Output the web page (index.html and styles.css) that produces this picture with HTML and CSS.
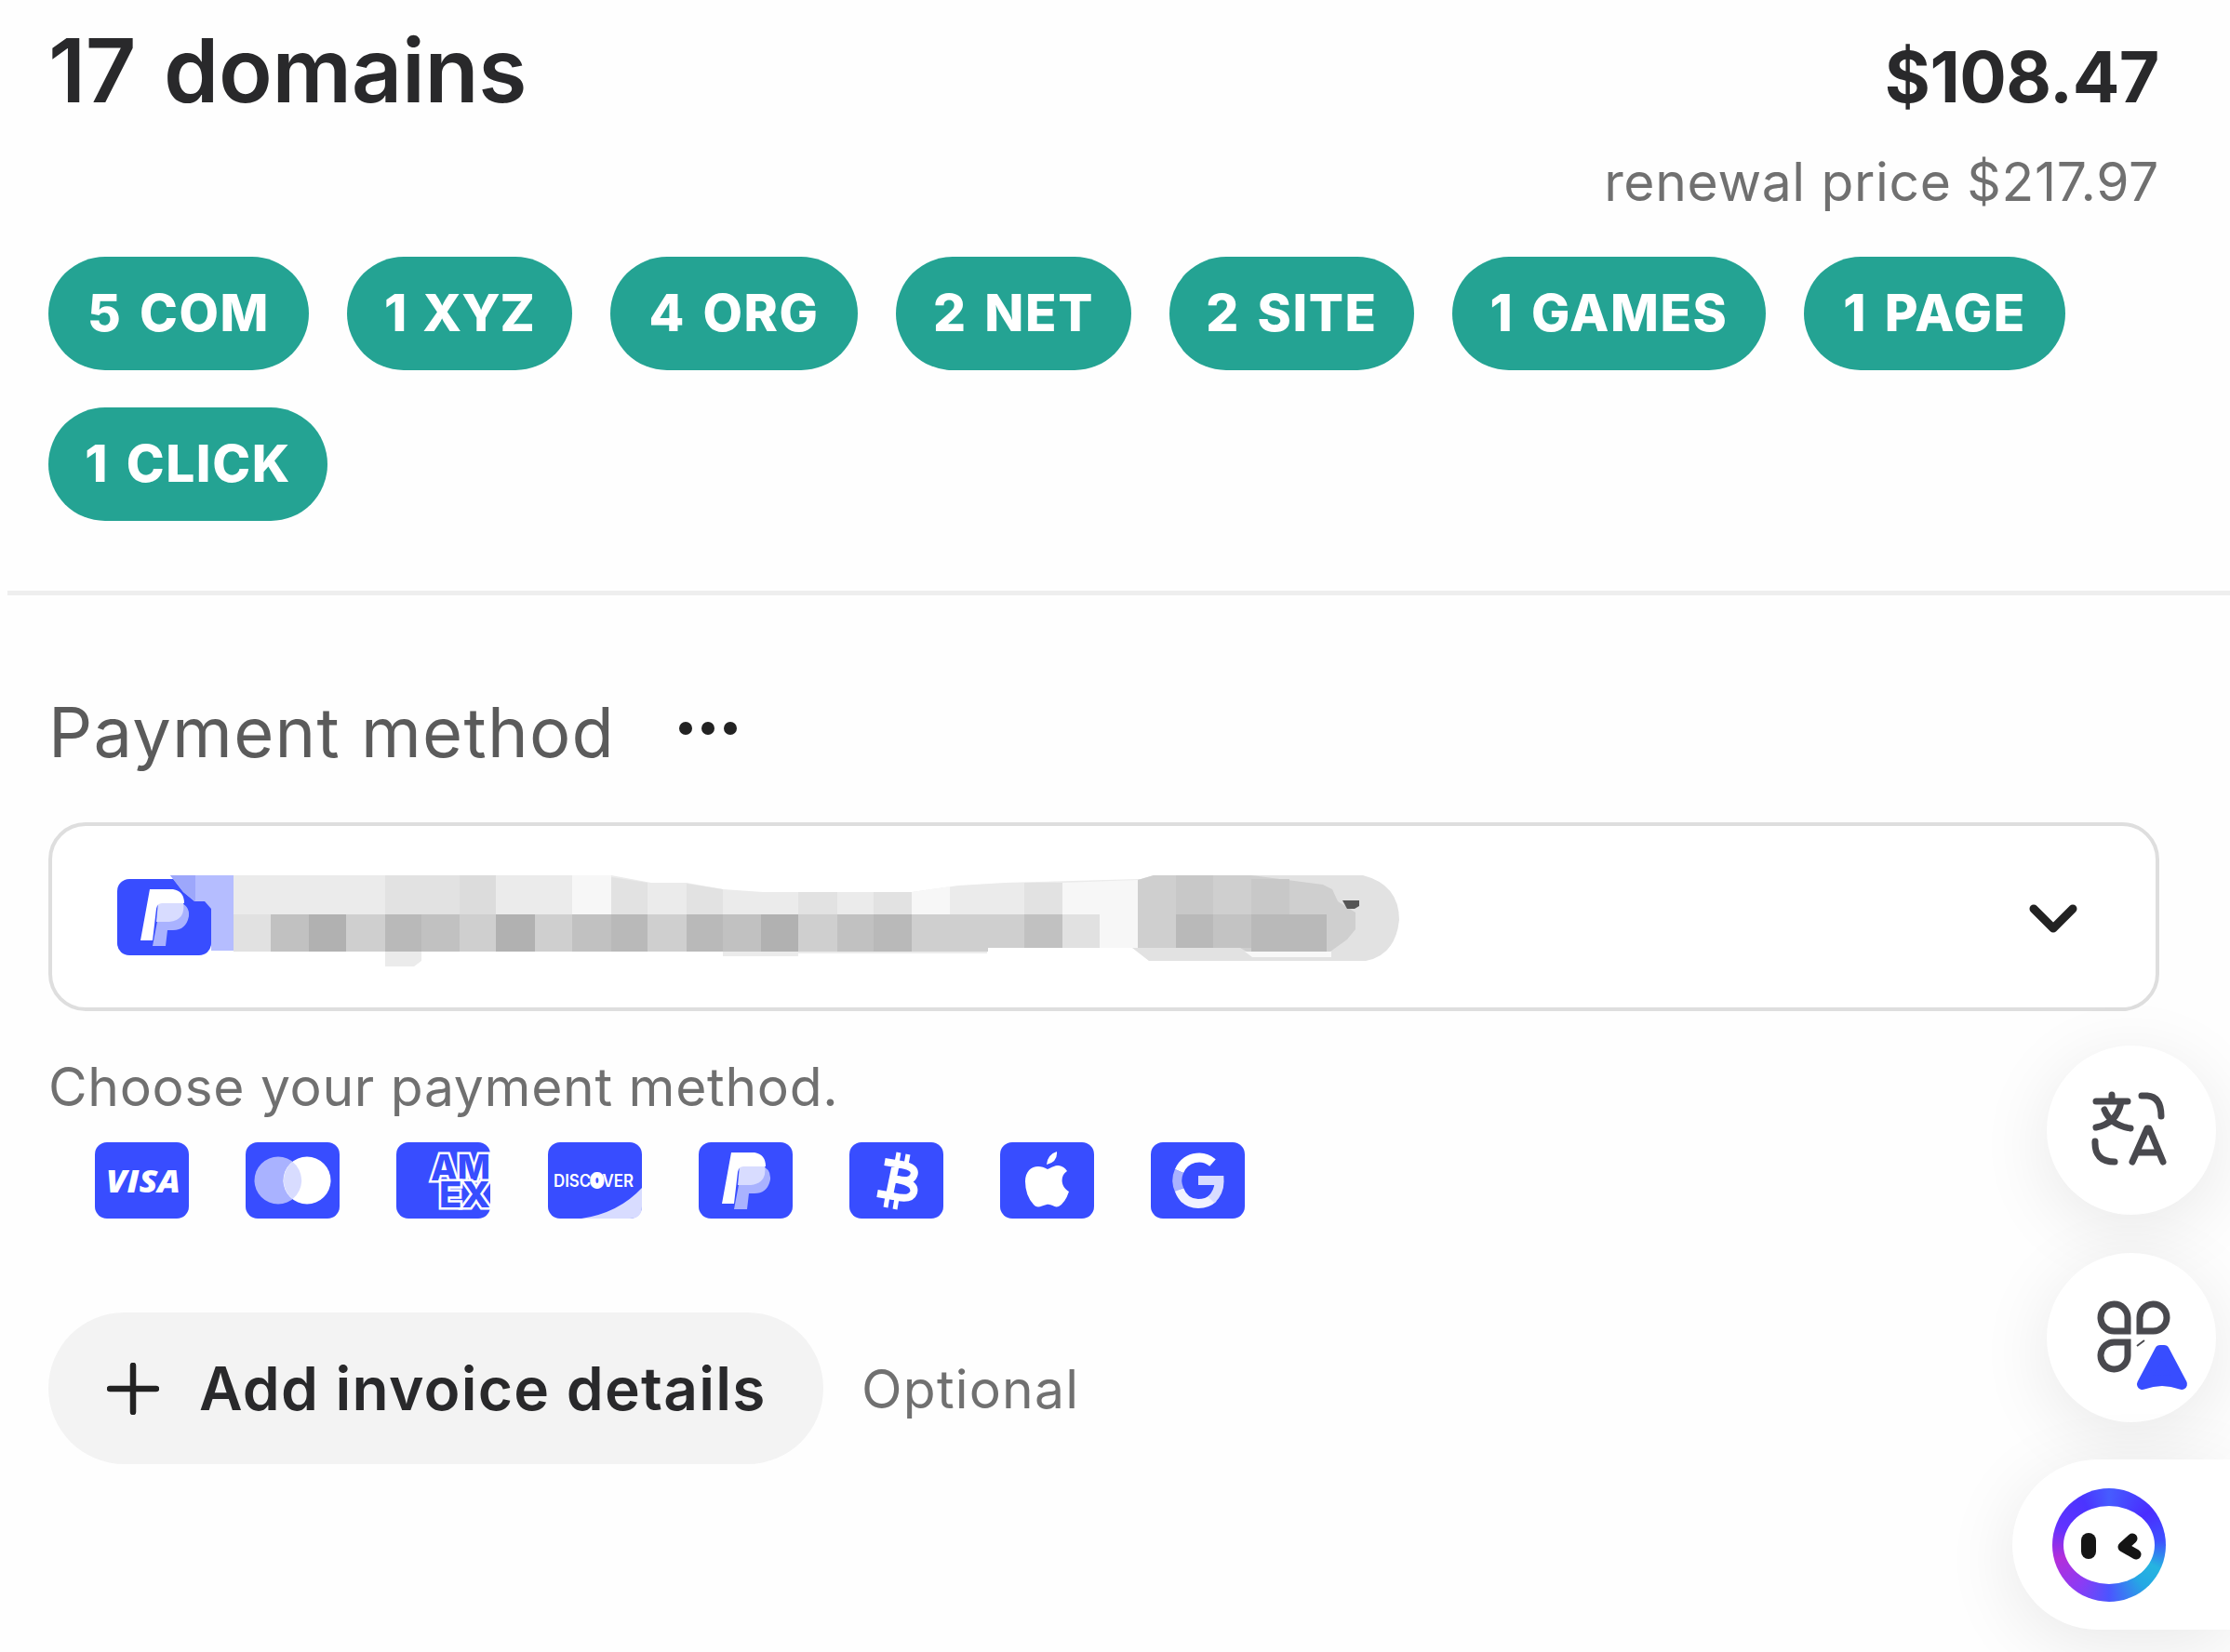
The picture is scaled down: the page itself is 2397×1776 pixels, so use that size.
FILE: index.html
```html
<!DOCTYPE html>
<html lang="en">
<head>
<meta charset="utf-8">
<title>Checkout</title>
<link rel="stylesheet" href="styles.css">
</head>
<body>
<svg class="defs" width="0" height="0">
  <defs>
    <symbol id="paypal" viewBox="0 0 101 82">
      <rect width="101" height="82" rx="13" fill="#384dff"/>
      <path d="M47 25H66Q78 28 77 40Q74 55 60 55H54L52 72H38Z" fill="#a9b2ff"/>
      <path d="M44 25H71Q74 44 56 46H42Z" fill="#d8dcff"/>
      <path d="M35 11H60Q72 13 72 26H48Q43 26 42 32L38 66H25Z" fill="#fff"/>
    </symbol>
  </defs>
</svg>
<main class="checkout">
  <section class="summary">
    <div class="summary-head">
      <h1 class="title">17 domains</h1>
      <div class="prices">
        <div class="price">$108.47</div>
        <div class="renewal">renewal price $217.97</div>
      </div>
    </div>
    <div class="tags">
      <span class="tag com">5 COM</span>
      <span class="tag xyz">1 XYZ</span>
      <span class="tag org">4 ORG</span>
      <span class="tag net">2 NET</span>
      <span class="tag site">2 SITE</span>
      <span class="tag games">1 GAMES</span>
      <span class="tag page">1 PAGE</span>
      <span class="tag click">1 CLICK</span>
    </div>
  </section>
  <hr class="divider">
  <section class="payment">
    <div class="payment-head">
      <h2 class="subtitle">Payment method</h2>
      <svg class="dots" width="64" height="16" viewBox="0 0 64 16" fill="#222"><circle cx="8" cy="8" r="7"/><circle cx="32" cy="8" r="7"/><circle cx="56" cy="8" r="7"/></svg>
    </div>
    <div class="select">
      <svg class="account" width="1390" height="110" viewBox="120 930 1390 110">
        <use href="#paypal" x="126" y="944" width="101" height="82"/>
        <path d="M183 940H251V1021H227V976L220 968H209L197 958Z" fill="#b5bdff"/>
        <path d="M183 940H210V968L197 958Z" fill="#9da7fb"/>
        <g fill="#ebebeb">
          <path d="M251 940H657L700 948H738L777 955L820 958H980L1030 951L1080 948L1225 944V982H251Z"/>
          <path fill="#e2e2e2" d="M414 940h39v42h-39zM453 940h41v42h-41zM657 942l39 6v34h-39zM738 949l39 6v27h-39zM858 958h42v24h-42zM939 958h41v24h-41zM1101 948h41v34h-41z"/>
          <path fill="#dcdcdc" d="M494 940h39v42h-39z"/>
          <path fill="#f7f7f7" d="M615 940h42v42h-42zM980 958l41-6v30h-41zM1142 948l81-3v73h-81z"/>
        </g>
        <path fill="#cfcfcf" d="M251 982H1142V1018H1062V1022H251Z"/>
        <path fill="#e1e1e1" d="M251 982h40v40h-40zM1142 982h40v36h-40z"/>
        <path fill="#c1c1c1" d="M291 982h41v40h-41zM453 982h41v40h-41zM615 982h42v40h-42zM777 982h41v40h-41zM900 982h39v40h-39zM1101 982h41v36h-41z"/>
        <path fill="#b9b9b9" d="M414 982h39v40h-39zM657 982h39v40h-39zM738 982h39v40h-39zM939 982h41v40h-41z"/>
        <path fill="#b1b1b1" d="M332 982h40v40h-40zM533 982h42v40h-42zM818 982h40v40h-40z"/>
        <path fill="#ebebeb" d="M414 1022h39v10l-8 6h-31zM777 1022h284v2H858v3h-81z"/>
        <path fill="#e2e2e2" d="M1223 945L1240 940H1465Q1504 950 1504 988Q1500 1026 1468 1032H1235L1217 1018H1223Z"/>
        <path fill="#cfcfcf" d="M1223 945L1240 940H1345L1422 950L1432 955L1438 968L1457 980V998L1448 1009L1430 1022H1340L1333 1018H1223Z"/>
        <path fill="#c8c8c8" d="M1264 940h40v42h-40zM1345 944h41v38h-41z"/>
        <path fill="#c3c3c3" d="M1304 982h41v36h-41z"/>
        <path fill="#b9b9b9" d="M1264 982h40v36h-40zM1345 982h81v40h-81z"/>
        <path fill="#f8f8f8" d="M1338 1022h93v6h-85z"/>
        <path fill="#555" d="M1443 967h18v6l-5 3h-8z"/>
      </svg>
      <svg class="chevron" width="54" height="34" viewBox="0 0 54 34" fill="none" stroke="#222" stroke-width="9" stroke-linecap="round" stroke-linejoin="round"><path d="M6 6L27 27L48 6"/></svg>
    </div>
    <p class="hint">Choose your payment method.</p>
    <div class="cards">
      <svg width="101" height="82" viewBox="0 0 101 82"><rect width="101" height="82" rx="13" fill="#384dff"/><text x="12" y="54" textLength="80" lengthAdjust="spacingAndGlyphs" class="visa">VISA</text></svg>
      <svg width="101" height="82" viewBox="0 0 101 82"><rect width="101" height="82" rx="13" fill="#384dff"/><circle cx="35" cy="41" r="25.500" fill="#a9b2ff"/><circle cx="66" cy="41" r="25.500" fill="#fff"/><path d="M50.500 21A25.500 25.500 0 0 1 50.500 61A25.500 25.500 0 0 1 50.500 21Z" fill="#d8dcff"/></svg>
      <svg width="101" height="82" viewBox="0 0 101 82"><rect width="101" height="82" rx="13" fill="#384dff"/><g class="amex"><text x="37" y="41" textLength="64" lengthAdjust="spacingAndGlyphs">AM</text><text x="46" y="70" textLength="55" lengthAdjust="spacingAndGlyphs">EX</text></g></svg>
      <svg width="101" height="82" viewBox="0 0 101 82"><rect width="101" height="82" rx="13" fill="#384dff"/><path d="M101 49V69Q101 82 88 82H36Q76 76 101 49Z" fill="#d8dcff"/><text x="6" y="48" textLength="86" lengthAdjust="spacingAndGlyphs" class="discover">DISC<tspan class="disc-o">O</tspan>VER</text></svg>
      <svg width="101" height="82"><use href="#paypal" width="101" height="82"/></svg>
      <svg width="101" height="82" viewBox="0 0 101 82"><rect width="101" height="82" rx="13" fill="#384dff"/><g fill="none" stroke="#fff"><path stroke-width="8" stroke-linejoin="round" d="M38 21L56 24Q73 27 69 36Q66 43 52 40Q72 44 69 54Q66 63 47 58L30 55M50 23L43 57M48 39L55 41"/><path stroke-width="5" d="M53 11L51 22M63 13L61 24M41 58L39 70M51 60L49 72"/></g></svg>
      <svg width="101" height="82" viewBox="0 0 101 82"><rect width="101" height="82" rx="13" fill="#384dff"/><path fill="#fff" d="M51 29C56 27 58 25 63 25Q69 26 72 31C64 36 65 48 74 53Q70 65 63 69C58 71 56 66 50 67C44 68 41 72 36 67Q27 57 27 42C27 27 40 22 51 29ZM50 24Q51 13 61 10Q62 21 50 24Z"/></svg>
      <svg width="101" height="82" viewBox="0 0 101 82"><rect width="101" height="82" rx="13" fill="#384dff"/><g fill="none" stroke-width="10"><path stroke="#fff" d="M66.500 22A23.500 25 0 0 0 30.500 31"/><path stroke="#a9b2ff" d="M30.500 31Q26 41 30.500 51"/><path stroke="#f1f2ff" d="M30.500 51Q36 66 51 66Q61 66 67 60"/><path stroke="#d8dcff" d="M65 62Q74 53 73.500 41H51"/></g></svg>
    </div>
    <div class="invoice">
      <button class="add">
        <svg width="56" height="56" viewBox="0 0 56 56" stroke="#222" stroke-width="6.500" stroke-linecap="round"><path d="M28 3V53M3 28H53"/></svg>
        <span>Add invoice details</span>
      </button>
      <span class="optional">Optional</span>
    </div>
  </section>
</main>
<aside class="float translate">
  <svg width="84" height="84" viewBox="0 0 84 84" fill="none" stroke="#49494e" stroke-width="7" stroke-linecap="round"><path d="M7 14H41M24 7V14M34 15Q29 38 7 42M16 23Q23 40 44 43M56 8H62Q77 9 77 30M6 57Q5 79 27 79M46 79L62 43H64L79 79M51 69H74" stroke-linejoin="round"/></svg>
</aside>
<aside class="float apps">
  <svg width="100" height="102" viewBox="0 0 100 102" fill="none" stroke="#49494e" stroke-width="7"><path d="M33 34H20A14.500 14.500 0 1 1 33 20ZM46 34V20A14.500 14.500 0 1 1 60 34ZM33 46V60A14.500 14.500 0 1 1 20 46Z"/><path stroke-width="2" d="M43 50L51 44"/><path fill="#384dff" stroke="#384dff" stroke-linejoin="round" stroke-width="12" d="M68 55H72L91 91Q70 83 49 91Z"/></svg>
</aside>
<aside class="assistant">
  <div class="ring"><div class="face"><svg width="98" height="84" viewBox="0 0 98 84" fill="none" stroke="#151515" stroke-linecap="round" stroke-linejoin="round"><path stroke-width="16" d="M27 37V49"/><path stroke-width="11" d="M74 35L64 44L78 52"/></svg></div></div>
</aside>
</body>
</html>
```
FILE: styles.css
```css
* { box-sizing: border-box; }
body {
  margin: 0;
  width: 2397px;
  height: 1776px;
  position: relative;
  overflow: hidden;
  background: #fefefe;
  color: #29292b;
  font-family: Inter, "Liberation Sans", sans-serif;
}
h1, h2, p { margin: 0; }
.defs { display: block; height: 0; }
.summary { height: 635px; padding: 28px 76px 0 52px; }
.summary-head { display: flex; justify-content: space-between; height: 248px; }
.title { font-size: 95px; line-height: 96px; font-weight: 600; letter-spacing: -.3px; word-spacing: 6px; }
.prices { text-align: right; padding-top: 15px; }
.price { font-size: 75px; line-height: 80px; font-weight: 700; letter-spacing: -.5px; }
.renewal { font-size: 57px; line-height: 60px; margin-top: 43px; color: #707070; letter-spacing: .65px; }
.tags { display: flex; flex-wrap: wrap; gap: 40px 41px; }
.tag {
  height: 122px;
  line-height: 121px;
  border-radius: 61px;
  background: #24a393;
  color: #fff;
  font-size: 55px;
  font-weight: 800;
  letter-spacing: 1.6px;
  word-spacing: 5px;
  text-align: center;
  white-space: nowrap;
}
.com { width: 280px; }
.xyz { width: 242px; letter-spacing: 0; }
.org { width: 266px; }
.net { width: 253px; }
.site { width: 263px; }
.games { width: 337px; }
.page { width: 281px; }
.click { width: 300px; }
.divider { height: 5px; margin: 0 0 0 8px; border: 0; background: #eee; }
.payment { padding: 107px 76px 0 52px; }
.payment-head { display: flex; align-items: center; height: 80px; gap: 68px; }
.subtitle { font-size: 74px; line-height: 80px; font-weight: 400; color: #5b5b5b; letter-spacing: 1.25px; }
.dots { margin-top: -8px; }
.select {
  display: flex;
  align-items: center;
  justify-content: space-between;
  height: 203px;
  margin-top: 57px;
  padding: 0 83px 0 64px;
  border: 4px solid #dedede;
  border-radius: 40px;
  background: #fff;
}
.chevron { margin-top: 4px; }
.hint { margin-top: 52px; font-size: 57px; line-height: 60px; color: #707070; letter-spacing: .7px; }
.cards { display: flex; gap: 61.2px; margin: 29px 0 0 50px; height: 82px; }
.visa { font: italic 800 34px "Open Sans", sans-serif; fill: #fff; }
.amex { font: 800 38px Inter, sans-serif; fill: #384dff; stroke: #fff; stroke-width: 5px; paint-order: stroke; }
.discover { font: 600 18px Inter, sans-serif; fill: #fff; }
.disc-o { stroke: #fff; stroke-width: 4px; }
.invoice { display: flex; align-items: center; gap: 41px; margin-top: 101px; }
.add {
  display: flex;
  align-items: center;
  gap: 43px;
  width: 833px;
  height: 163px;
  padding: 0 0 0 63px;
  border: 0;
  border-radius: 82px;
  background: #f3f3f3;
  color: #29292b;
  font: 600 64px Inter, sans-serif;
  letter-spacing: 1.25px;
  white-space: nowrap;
}
.optional { font-size: 57px; color: #707070; letter-spacing: 1.2px; padding-top: 2px; }
.float, .assistant { position: absolute; background: #fff; box-shadow: 0 16px 80px rgba(0, 0, 0, .09); }
.float { left: 2200px; width: 182px; height: 182px; border-radius: 50%; }
.translate { top: 1124px; padding: 46px 0 0 46px; }
.apps { top: 1347px; padding: 50px 0 0 54px; }
.assistant { top: 1569px; left: 2163px; width: 234px; height: 183px; border-radius: 92px 0 0 92px; padding: 31px 0 0 43px; }
.ring {
  display: grid;
  place-items: center;
  width: 122px;
  height: 122px;
  border-radius: 50%;
  background: conic-gradient(#465cff, #4a2cff 50deg, #3e50ff 85deg, #25b4e0 115deg, #25a8e4 140deg, #4b55ff 180deg, #8a3cf5 215deg, #b32fda 255deg, #6132ff 290deg, #4b34ff 330deg, #465cff);
}
.face { width: 98px; height: 84px; border-radius: 50%; background: #fff; }
.face svg { display: block; }
```
